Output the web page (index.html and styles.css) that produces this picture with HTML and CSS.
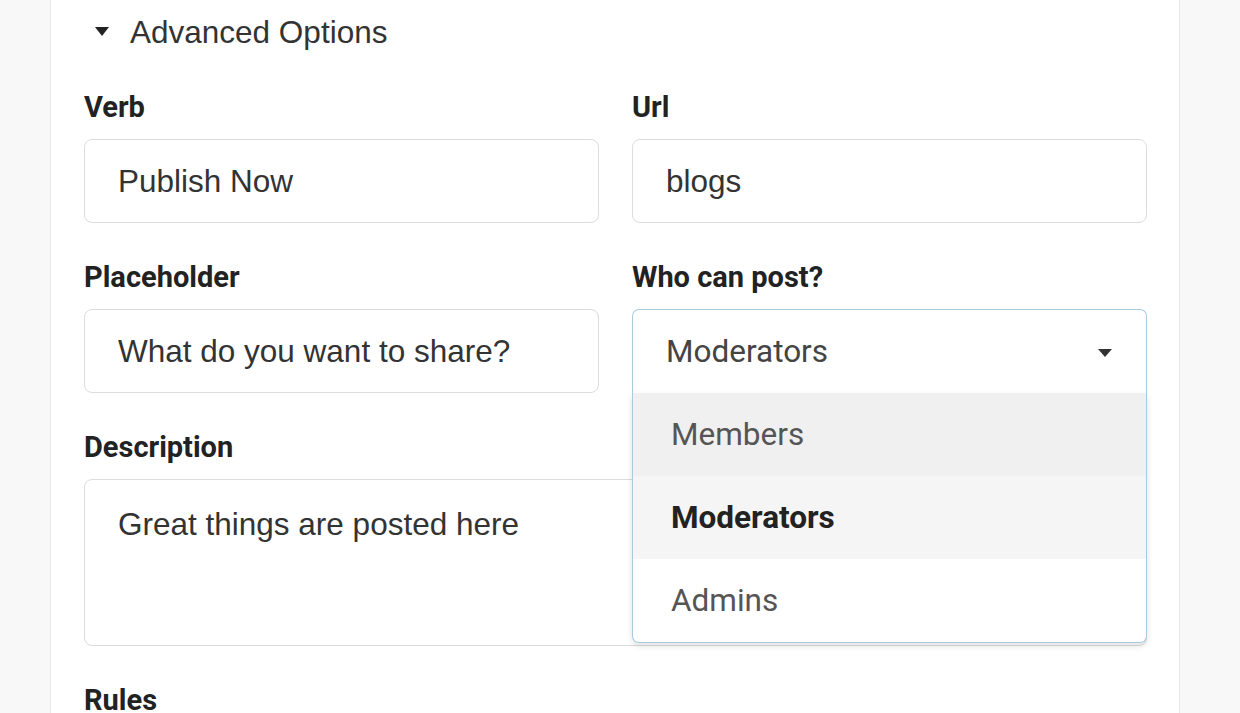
FILE: index.html
```html
<!DOCTYPE html>
<html lang="en">
<head>
<meta charset="utf-8">
<title>Advanced Options</title>
<link rel="stylesheet" href="styles.css">
</head>
<body>
<div class="page">
  <div class="card">
    <div class="summary"><span class="caret-down"></span><span class="summary-text">Advanced Options</span></div>
    <div class="form-grid">
      <div class="field">
        <label class="label">Verb</label>
        <input class="input" type="text" value="Publish Now">
      </div>
      <div class="field">
        <label class="label">Url</label>
        <input class="input" type="text" value="blogs">
      </div>
      <div class="field">
        <label class="label">Placeholder</label>
        <input class="input" type="text" value="What do you want to share?">
      </div>
      <div class="field field-select">
        <label class="label">Who can post?</label>
        <div class="select">
          <div class="select-box"><span class="select-value">Moderators</span><span class="select-caret"></span></div>
          <ul class="menu">
            <li class="option option-hover">Members</li>
            <li class="option option-selected">Moderators</li>
            <li class="option">Admins</li>
          </ul>
        </div>
      </div>
      <div class="field field-wide">
        <label class="label">Description</label>
        <textarea class="textarea">Great things are posted here</textarea>
      </div>
      <div class="field field-wide">
        <label class="label">Rules</label>
      </div>
    </div>
  </div>
</div>
</body>
</html>
```

FILE: styles.css
```css
* { box-sizing: border-box; }
html, body { margin: 0; padding: 0; }
body {
  background: #f8f8f8;
  font-family: "Liberation Sans", Arial, sans-serif;
  color: #333;
  height: 713px;
  overflow: hidden;
}
.page {
  padding-left: 50px;
}
.card {
  width: 1130px;
  min-height: 760px;
  background: #fff;
  border-left: 1px solid #e8e8e8;
  border-right: 1px solid #e8e8e8;
  padding: 13px 32px 0 33px;
}
.summary {
  display: flex;
  align-items: center;
  height: 38px;
  padding-left: 11px;
  gap: 21px;
}
.caret-down {
  width: 0;
  height: 0;
  border-left: 7.5px solid transparent;
  border-right: 7.5px solid transparent;
  border-top: 9px solid #222;
  margin-top: -1px;
}
.summary-text {
  font-size: 31.5px;
  line-height: 38px;
  color: #333;
}
.form-grid {
  margin-top: 39px;
  display: grid;
  grid-template-columns: 1fr 1fr;
  column-gap: 33px;
  row-gap: 37px;
}
.field {
  display: flex;
  flex-direction: column;
  gap: 15px;
}
.field-wide { grid-column: 1 / -1; }
.label {
  font-family: Roboto, "Liberation Sans", sans-serif;
  font-weight: 700;
  font-size: 29px;
  line-height: 34px;
  color: #222;
}
.input {
  display: block;
  width: 100%;
  height: 84px;
  margin: 0;
  border: 1px solid #dcdcdc;
  border-radius: 8px;
  padding: 0 33px;
  font-family: "Liberation Sans", Arial, sans-serif;
  font-size: 31.5px;
  color: #333;
  background: #fff;
  outline: none;
}
.textarea {
  display: block;
  width: 100%;
  height: 167px;
  margin: 0;
  border: 1px solid #dcdcdc;
  border-radius: 8px;
  padding: 26px 33px;
  font-family: "Liberation Sans", Arial, sans-serif;
  font-size: 31.5px;
  line-height: 36px;
  color: #333;
  background: #fff;
  resize: none;
  outline: none;
}
.field-select { position: relative; z-index: 2; }
.select {
  position: relative;
  height: 84px;
}
.select-box {
  height: 84px;
  border: 1px solid #a9cbe0;
  border-bottom: 0;
  border-radius: 7px 7px 0 0;
  background: #fff;
  display: flex;
  align-items: center;
  justify-content: space-between;
  padding: 0 34px 0 33px;
}
.select-value {
  font-family: Roboto, "Liberation Sans", sans-serif;
  font-size: 31.5px;
  color: #444;
}
.select-caret {
  width: 0;
  height: 0;
  border-left: 7px solid transparent;
  border-right: 7px solid transparent;
  border-top: 8px solid #333;
  margin-top: 2px;
}
.menu {
  position: absolute;
  top: 84px;
  left: 0;
  right: 0;
  margin: 0;
  padding: 0;
  list-style: none;
  background: #fff;
  border: 1px solid #a9cbe0;
  border-top: 0;
  border-radius: 0 0 7px 7px;
  box-shadow: 0 3px 6px rgba(0, 0, 0, 0.12);
  overflow: hidden;
}
.option {
  height: 83px;
  display: flex;
  align-items: center;
  padding-left: 38px;
  font-family: Roboto, "Liberation Sans", sans-serif;
  font-size: 31.5px;
  color: #555;
}
.option-hover { background: #f0f0f0; }
.option-selected {
  background: #f5f5f5;
  font-weight: 700;
  color: #222;
}
```
